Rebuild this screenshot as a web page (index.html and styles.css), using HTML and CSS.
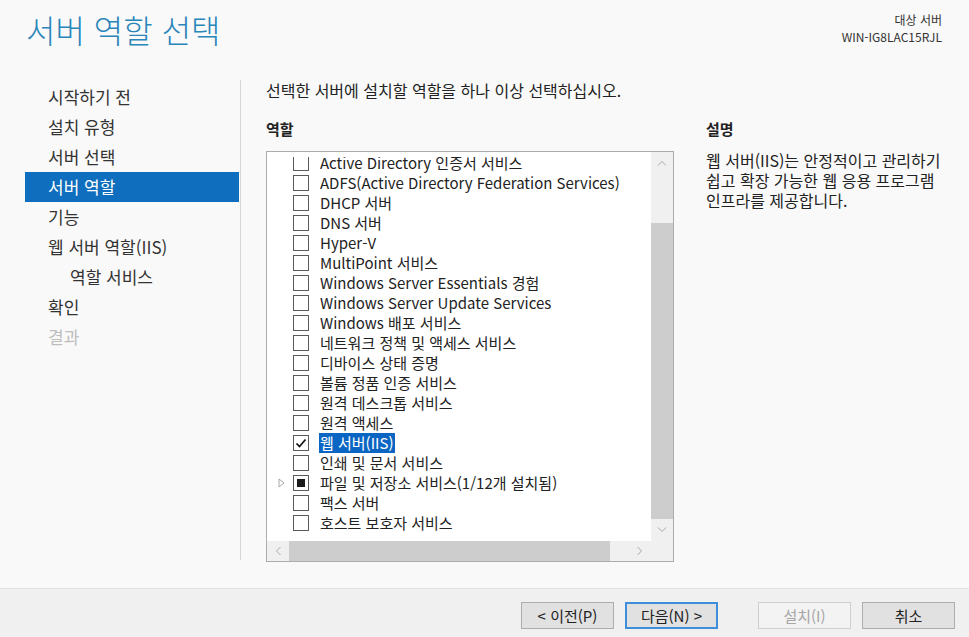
FILE: index.html
```html
<!DOCTYPE html>
<html lang="ko">
<head>
    <meta charset="UTF-8">
    <meta name="viewport" content="width=device-width, initial-scale=1.0">
    <title>서버 역할 선택</title>
    <link rel="stylesheet" href="styles.css">
</head>
<body>
    <header class="top">
        <h1 class="page-title">서버 역할 선택</h1>
        <div class="target">
            <div>대상 서버</div>
            <div>WIN-IG8LAC15RJL</div>
        </div>
    </header>

    <div class="wizard">
        <nav class="steps">
            <div class="step">시작하기 전</div>
            <div class="step">설치 유형</div>
            <div class="step">서버 선택</div>
            <div class="step active">서버 역할</div>
            <div class="step">기능</div>
            <div class="step">웹 서버 역할(IIS)</div>
            <div class="step sub">역할 서비스</div>
            <div class="step">확인</div>
            <div class="step disabled">결과</div>
        </nav>

        <main class="content">
            <p class="intro">선택한 서버에 설치할 역할을 하나 이상 선택하십시오.</p>
            <div class="panes">
                <section class="roles">
                    <h2>역할</h2>
                    <div class="listbox">
                        <div class="list-view">
                            <ul class="rows">
                                <li><span class="exp"></span><span class="box"></span><span class="label">Active Directory 인증서 서비스</span></li>
                                <li><span class="exp"></span><span class="box"></span><span class="label">ADFS(Active Directory Federation Services)</span></li>
                                <li><span class="exp"></span><span class="box"></span><span class="label">DHCP 서버</span></li>
                                <li><span class="exp"></span><span class="box"></span><span class="label">DNS 서버</span></li>
                                <li><span class="exp"></span><span class="box"></span><span class="label">Hyper-V</span></li>
                                <li><span class="exp"></span><span class="box"></span><span class="label">MultiPoint 서비스</span></li>
                                <li><span class="exp"></span><span class="box"></span><span class="label">Windows Server Essentials 경험</span></li>
                                <li><span class="exp"></span><span class="box"></span><span class="label">Windows Server Update Services</span></li>
                                <li><span class="exp"></span><span class="box"></span><span class="label">Windows 배포 서비스</span></li>
                                <li><span class="exp"></span><span class="box"></span><span class="label">네트워크 정책 및 액세스 서비스</span></li>
                                <li><span class="exp"></span><span class="box"></span><span class="label">디바이스 상태 증명</span></li>
                                <li><span class="exp"></span><span class="box"></span><span class="label">볼륨 정품 인증 서비스</span></li>
                                <li><span class="exp"></span><span class="box"></span><span class="label">원격 데스크톱 서비스</span></li>
                                <li><span class="exp"></span><span class="box"></span><span class="label">원격 액세스</span></li>
                                <li class="selected">
                                    <span class="exp"></span>
                                    <span class="box checked">
                                        <svg width="14" height="14" viewBox="0 0 14 14"><path d="M2.5 7.5 L5.5 10.5 L11.5 3.5" stroke="#111" stroke-width="1.7" fill="none"/></svg>
                                    </span>
                                    <span class="label">웹 서버(IIS)</span>
                                </li>
                                <li><span class="exp"></span><span class="box"></span><span class="label">인쇄 및 문서 서비스</span></li>
                                <li>
                                    <span class="exp">
                                        <svg width="7" height="10" viewBox="0 0 7 10"><path d="M1 1 L6 5 L1 9 Z" fill="none" stroke="#a8a8a8"/></svg>
                                    </span>
                                    <span class="box partial"><span class="fill"></span></span>
                                    <span class="label">파일 및 저장소 서비스(1/12개 설치됨)</span>
                                </li>
                                <li><span class="exp"></span><span class="box"></span><span class="label">팩스 서버</span></li>
                                <li><span class="exp"></span><span class="box"></span><span class="label">호스트 보호자 서비스</span></li>
                            </ul>
                        </div>
                        <div class="vbar">
                            <span class="arrow up">
                                <svg width="10" height="6" viewBox="0 0 10 6"><path d="M1 5.5 L5 1.5 L9 5.5" stroke="#a8a8a8" fill="none"/></svg>
                            </span>
                            <span class="thumb"></span>
                            <span class="arrow down">
                                <svg width="10" height="6" viewBox="0 0 10 6"><path d="M1 0.5 L5 4.5 L9 0.5" stroke="#a8a8a8" fill="none"/></svg>
                            </span>
                        </div>
                        <div class="hbar">
                            <span class="arrow left">
                                <svg width="6" height="10" viewBox="0 0 6 10"><path d="M5.5 1 L1.5 5 L5.5 9" stroke="#a8a8a8" fill="none"/></svg>
                            </span>
                            <span class="thumb"></span>
                            <span class="track"></span>
                            <span class="arrow right">
                                <svg width="6" height="10" viewBox="0 0 6 10"><path d="M0.5 1 L4.5 5 L0.5 9" stroke="#a8a8a8" fill="none"/></svg>
                            </span>
                        </div>
                        <div class="corner"></div>
                    </div>
                </section>

                <section class="about">
                    <h2>설명</h2>
                    <p>웹 서버(IIS)는 안정적이고 관리하기 쉽고 확장 가능한 웹 응용 프로그램 인프라를 제공합니다.</p>
                </section>
            </div>
        </main>
    </div>

    <footer class="actions">
        <button class="btn">&lt; 이전(P)</button>
        <button class="btn default">다음(N) &gt;</button>
        <button class="btn install" disabled>설치(I)</button>
        <button class="btn">취소</button>
    </footer>
</body>
</html>
```

FILE: styles.css
```css
* {
    box-sizing: border-box;
}
body {
    font-family: "Noto Sans CJK KR", sans-serif;
    font-size: 16px;
    color: #222;
    background-color: #f9f9f9;
    margin: 0;
    height: 100vh;
    display: flex;
    flex-direction: column;
    overflow: hidden;
}

/* Header */
.top {
    height: 80px;
    display: flex;
    justify-content: space-between;
    align-items: flex-start;
}
.page-title {
    margin: 0;
    padding: 9px 0 0 26px;
    font-size: 32px;
    font-weight: 300;
    line-height: 40px;
    color: #2a85ba;
}
.target {
    padding: 11px 27px 0 0;
    font-size: 12px;
    line-height: 17px;
    text-align: right;
    color: #333;
}

/* Wizard body */
.wizard {
    flex: 1;
    display: flex;
    min-height: 0;
}
.steps {
    width: 241px;
    padding: 2px 1px 0 25px;
    margin-bottom: 28px;
    border-right: 1px solid #d6d6d6;
}
.step {
    height: 30px;
    line-height: 30px;
    padding-left: 23px;
    font-size: 17px;
    color: #333;
}
.step.sub {
    padding-left: 45px;
}
.step.active {
    background-color: #0f6ebe;
    color: #fff;
}
.step.disabled {
    color: #bdbdbd;
}

.content {
    flex: 1;
    padding-left: 25px;
}
.intro {
    margin: 0;
    line-height: 20px;
}
.panes {
    display: flex;
    gap: 32px;
    margin-top: 19px;
}
.panes h2 {
    margin: 0;
    font-size: 15px;
    font-weight: bold;
    line-height: 20px;
}
.roles {
    width: 408px;
}
.about {
    width: 252px;
}
.about p {
    margin: 11px 0 0;
    line-height: 20px;
    word-break: keep-all;
}

/* Role list */
.listbox {
    margin-top: 12px;
    height: 411px;
    border: 1px solid #acacac;
    background-color: #fff;
    display: grid;
    grid-template-columns: 1fr 22px;
    grid-template-rows: 1fr 20px;
    font-size: 15px;
}
.list-view {
    padding-top: 5px;
    min-height: 0;
    display: flex;
    flex-direction: column;
}
.rows {
    flex: 1;
    margin: 0;
    padding: 0;
    list-style: none;
    overflow: hidden;
}
.rows li {
    height: 20px;
    display: flex;
    align-items: center;
    white-space: nowrap;
}
.rows li:first-child {
    margin-top: -4px;
}
.exp {
    width: 26px;
    height: 20px;
    display: flex;
    align-items: center;
    padding-left: 11px;
}
.box {
    width: 16px;
    height: 16px;
    border: 1px solid #5a5a5a;
    background-color: #fff;
    display: flex;
    align-items: center;
    justify-content: center;
}
.box.partial .fill {
    width: 8px;
    height: 8px;
    background-color: #1a1a1a;
}
.label {
    margin-left: 10px;
    padding: 0 2px 0 1px;
    line-height: 20px;
}
.selected .label {
    background-color: #0a66c2;
    color: #fff;
}

/* Scroll bars */
.vbar, .hbar, .corner {
    background-color: #f0f0f0;
}
.vbar {
    display: flex;
    flex-direction: column;
    min-height: 0;
}
.vbar .arrow {
    height: 21px;
    display: flex;
    align-items: center;
    justify-content: center;
}
.vbar .down {
    height: 22px;
    margin-top: auto;
}
.vbar .thumb {
    margin-top: 50px;
    height: 296px;
    background-color: #cdcdcd;
}
.hbar {
    display: flex;
}
.hbar .arrow {
    width: 22px;
    display: flex;
    align-items: center;
    justify-content: center;
}
.hbar .thumb {
    width: 321px;
    background-color: #cdcdcd;
}
.hbar .track {
    flex: 1;
}

/* Bottom buttons */
.actions {
    height: 49px;
    border-top: 1px solid #e2e2e2;
    background-color: #f0f0f0;
    display: flex;
    justify-content: flex-end;
    gap: 11px;
    padding: 13px 14px 0 0;
}
.btn {
    width: 93px;
    height: 27px;
    font-family: inherit;
    font-size: 15px;
    color: #222;
    background-color: #e1e1e1;
    border: 1px solid #adadad;
    padding: 0;
}
.btn.default {
    border: 2px solid #3d8fdc;
}
.btn.install {
    margin-left: 29px;
    background-color: #f3f3f3;
    border-color: #cfcfcf;
    color: #a6a6a6;
}
```
